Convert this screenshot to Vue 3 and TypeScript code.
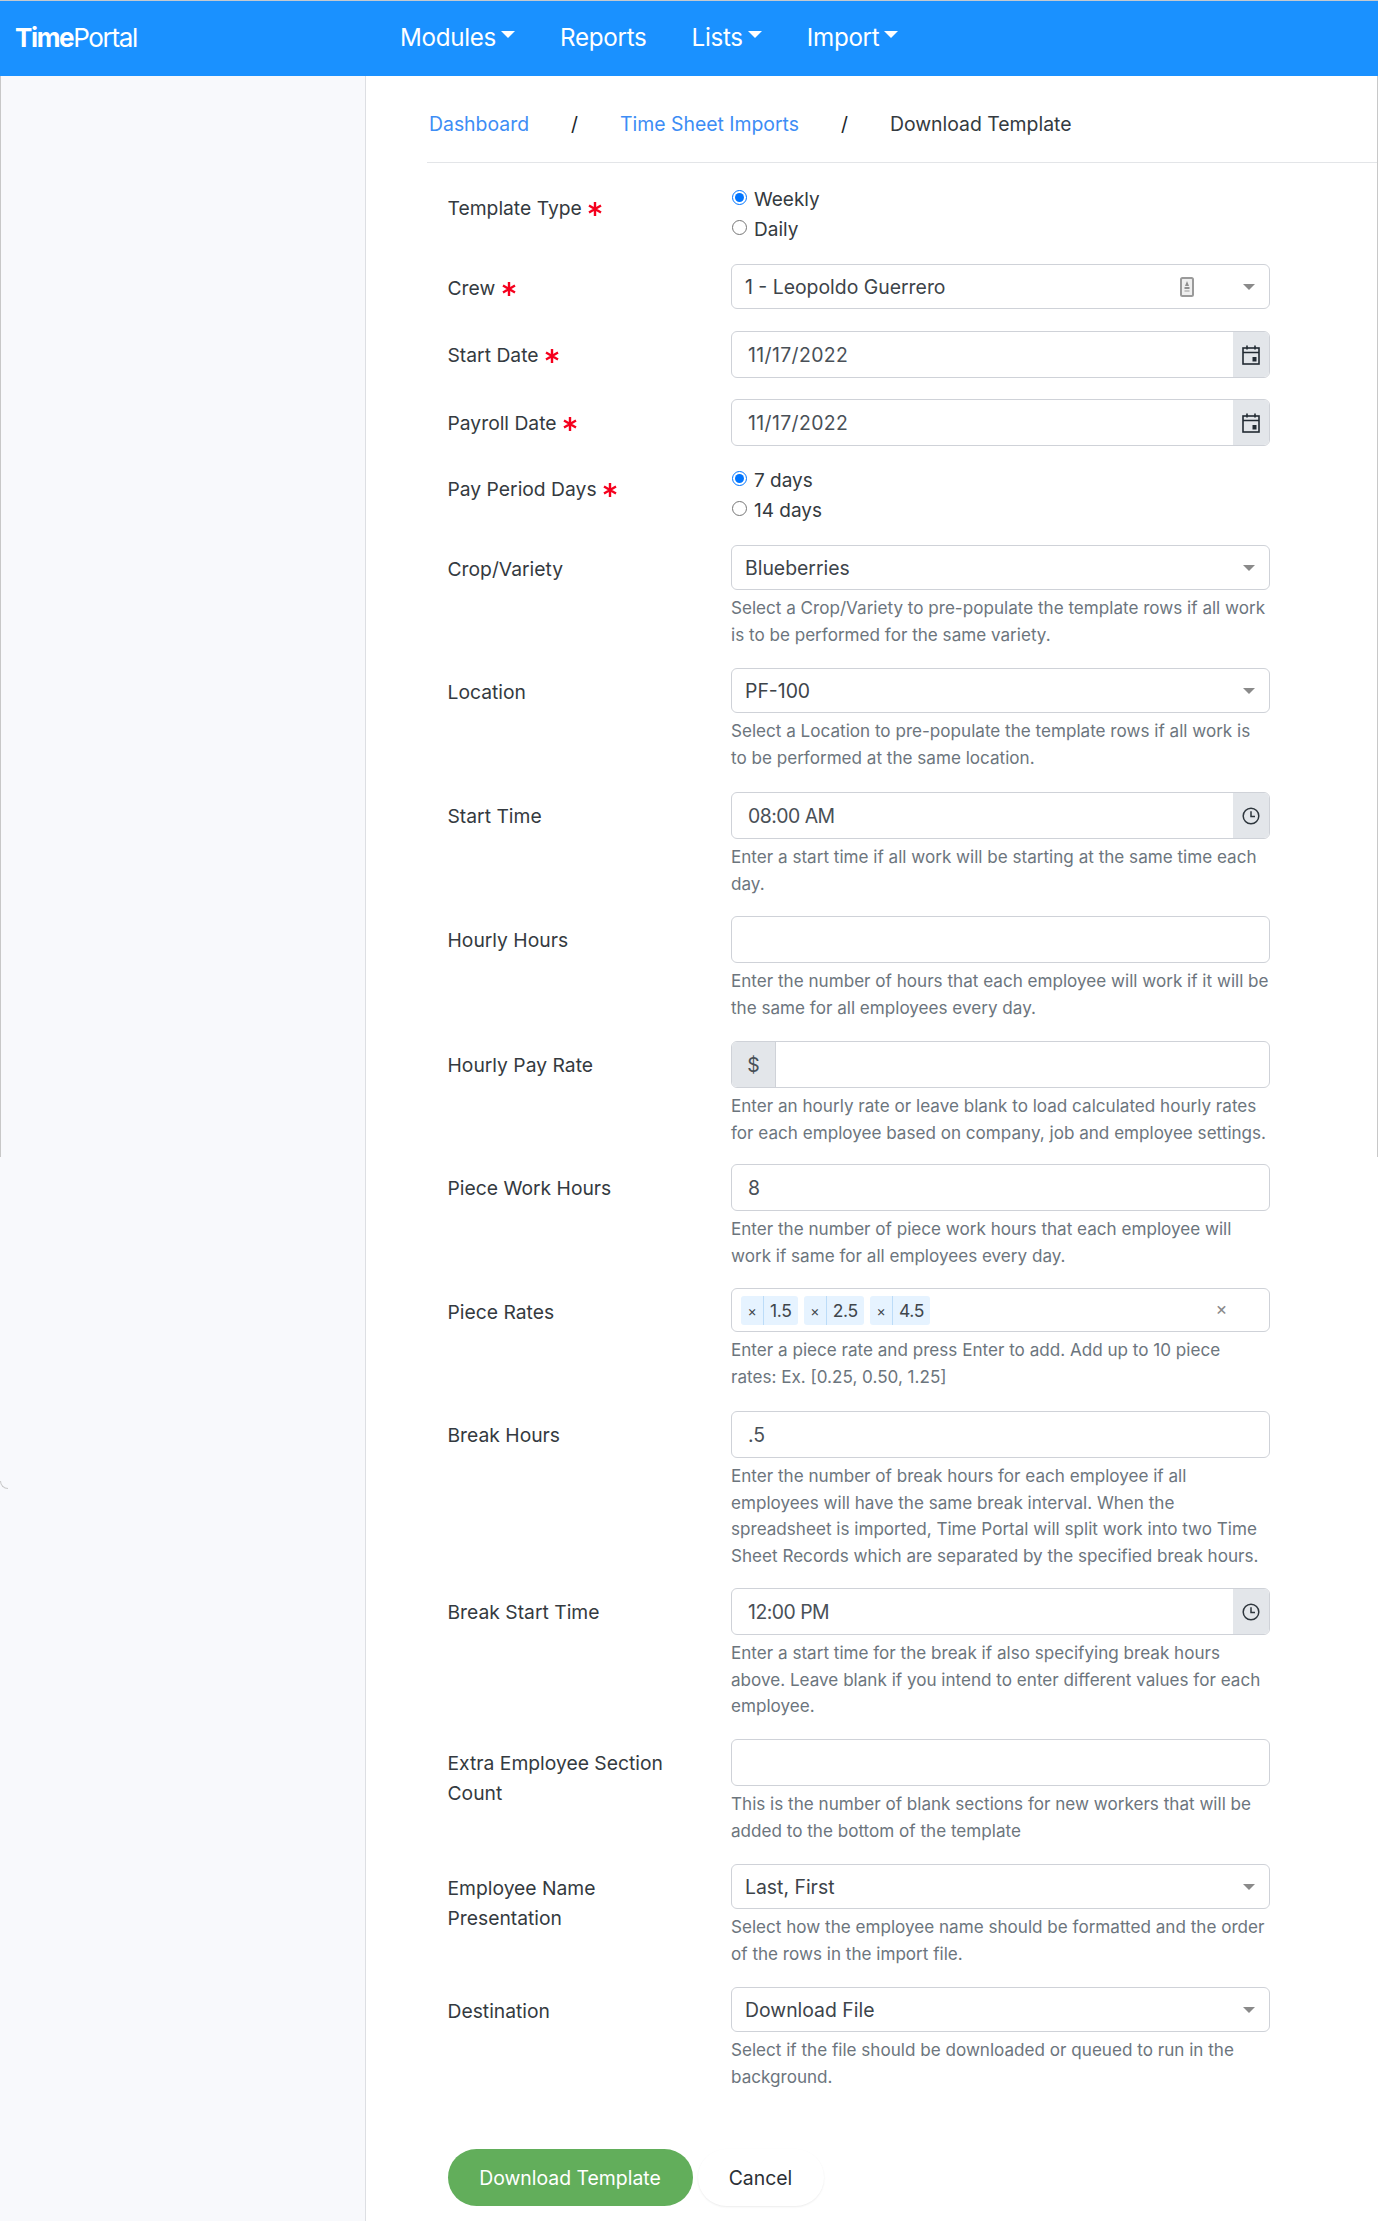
<script setup lang="ts">
type Row = {
  label: string[];
  req?: boolean;
  kind: 'radio' | 'select' | 'input' | 'date' | 'time' | 'money' | 'tags';
  value?: string;
  options?: { text: string; on: boolean }[];
  help?: string[];
  crew?: boolean;
  gap: number;
};

const navItems = [
  { text: 'Modules', caret: true },
  { text: 'Reports', caret: false },
  { text: 'Lists', caret: true },
  { text: 'Import', caret: true },
];

const rows: Row[] = [
  { gap: 20, label: ['Template Type'], req: true, kind: 'radio', options: [{ text: 'Weekly', on: true }, { text: 'Daily', on: false }] },
  { gap: 22, label: ['Crew'], req: true, kind: 'select', value: '1 - Leopoldo Guerrero', crew: true },
  { gap: 21, label: ['Start Date'], req: true, kind: 'date', value: '11/17/2022' },
  { gap: 19, label: ['Payroll Date'], req: true, kind: 'date', value: '11/17/2022' },
  { gap: 20, label: ['Pay Period Days'], req: true, kind: 'radio', options: [{ text: '7 days', on: true }, { text: '14 days', on: false }] },
  { gap: 20, label: ['Crop/Variety'], kind: 'select', value: 'Blueberries', help: ['Select a Crop/Variety to pre-populate the template rows if all work', 'is to be performed for the same variety.'] },
  { gap: 21, label: ['Location'], kind: 'select', value: 'PF-100', help: ['Select a Location to pre-populate the template rows if all work is', 'to be performed at the same location.'] },
  { gap: 19, label: ['Start Time'], kind: 'time', value: '08:00 AM', help: ['Enter a start time if all work will be starting at the same time each', 'day.'] },
  { gap: 20, label: ['Hourly Hours'], kind: 'input', value: '', help: ['Enter the number of hours that each employee will work if it will be', 'the same for all employees every day.'] },
  { gap: 18, label: ['Hourly Pay Rate'], kind: 'money', value: '', help: ['Enter an hourly rate or leave blank to load calculated hourly rates', 'for each employee based on company, job and employee settings.'] },
  { gap: 19, label: ['Piece Work Hours'], kind: 'input', value: '8', help: ['Enter the number of piece work hours that each employee will', 'work if same for all employees every day.'] },
  { gap: 21, label: ['Piece Rates'], kind: 'tags', help: ['Enter a piece rate and press Enter to add. Add up to 10 piece', 'rates: Ex. [0.25, 0.50, 1.25]'] },
  { gap: 19, label: ['Break Hours'], kind: 'input', value: '.5', help: ['Enter the number of break hours for each employee if all', 'employees will have the same break interval. When the', 'spreadsheet is imported, Time Portal will split work into two Time', 'Sheet Records which are separated by the specified break hours.'] },
  { gap: 19.5, label: ['Break Start Time'], kind: 'time', value: '12:00 PM', help: ['Enter a start time for the break if also specifying break hours', 'above. Leave blank if you intend to enter different values for each', 'employee.'] },
  { gap: 20, label: ['Extra Employee Section', 'Count'], kind: 'input', value: '', help: ['This is the number of blank sections for new workers that will be', 'added to the bottom of the template'] },
  { gap: 20, label: ['Employee Name', 'Presentation'], kind: 'select', value: 'Last, First', help: ['Select how the employee name should be formatted and the order', 'of the rows in the import file.'] },
  { gap: 0, label: ['Destination'], kind: 'select', value: 'Download File', help: ['Select if the file should be downloaded or queued to run in the', 'background.'] },
];

const tags = ['1.5', '2.5', '4.5'];
</script>

<template>
  <div class="page">
    <header class="nav">
      <div class="logo"><b>Time</b>Portal</div>
      <nav class="menu">
        <a v-for="item in navItems" :key="item.text" class="menu-item">
          {{ item.text }}<i v-if="item.caret" class="nav-caret"></i>
        </a>
      </nav>
    </header>
    <div class="body">
      <aside class="side"></aside>
      <main class="main">
        <div class="crumbs">
          <a class="link">Dashboard</a>
          <span class="sep">/</span>
          <a class="link">Time Sheet Imports</a>
          <span class="sep">/</span>
          <span class="current">Download Template</span>
        </div>
        <form class="form" @submit.prevent>
          <div v-for="row in rows" :key="row.label[0]" class="row" :style="{ marginBottom: row.gap + 'px' }">
            <div class="label">
              <div v-for="(line, i) in row.label" :key="i">
                {{ line }}
                <svg v-if="row.req" class="star" viewBox="0 0 14 14" width="14" height="14">
                  <path d="M7 0v14M1 3.5l12 7M13 3.5l-12 7" stroke="#f5001d" stroke-width="2.4" fill="none" />
                </svg>
              </div>
            </div>
            <div class="control">
              <div v-if="row.kind === 'radio'" class="radios">
                <label v-for="o in row.options" :key="o.text" class="radio">
                  <input type="radio" :checked="o.on" :name="row.label[0]" />
                  <span>{{ o.text }}</span>
                </label>
              </div>

              <div v-else-if="row.kind === 'select'" class="box select">
                <span class="select-text">{{ row.value }}</span>
                <svg v-if="row.crew" class="crew-icon" viewBox="0 0 14 20" width="14" height="20">
                  <rect x="1" y="1" width="12" height="18" rx="1.5" fill="#efefef" stroke="#9a9a9a" stroke-width="2" />
                  <path d="M7 4l2 5H5z" fill="#8f8f8f" />
                  <rect x="4.5" y="10" width="5" height="2" fill="#8f8f8f" />
                  <rect x="4.5" y="13" width="5" height="2" fill="#c4c4c4" />
                </svg>
                <i class="select-caret"></i>
              </div>

              <div v-else-if="row.kind === 'tags'" class="box tags">
                <span v-for="t in tags" :key="t" class="tag">
                  <span class="tag-x">×</span><span class="tag-v">{{ t }}</span>
                </span>
                <span class="tags-clear">×</span>
              </div>

              <div v-else class="box field">
                <span v-if="row.kind === 'money'" class="addon addon-left">$</span>
                <input class="text" :class="'text-' + row.kind" type="text" :value="row.value" />
                <span v-if="row.kind === 'date'" class="addon">
                  <svg viewBox="0 0 18 20" width="18" height="20" fill="none" stroke="#222b33" stroke-width="1.6">
                    <rect x="1" y="3" width="16" height="16" />
                    <path d="M1 7.5h16M5 0.5v4M13 0.5v4" />
                    <rect x="10.5" y="12" width="4" height="4.5" fill="#222b33" stroke="none" />
                  </svg>
                </span>
                <span v-if="row.kind === 'time'" class="addon">
                  <svg viewBox="0 0 18 18" width="18" height="18" fill="none" stroke="#2e363d" stroke-width="1.5">
                    <circle cx="9" cy="9" r="7.8" />
                    <path d="M9 4.2v5.3h4" />
                  </svg>
                </span>
              </div>

              <div v-if="row.help" class="help">
                <div v-for="(line, i) in row.help" :key="i">{{ line }}</div>
              </div>
            </div>
          </div>
          <div class="actions">
            <button class="btn primary" type="button">Download Template</button>
            <button class="btn plain" type="button">Cancel</button>
          </div>
        </form>
      </main>
    </div>
    <i class="edge edge-left"></i>
    <i class="edge edge-right"></i>
    <i class="corner"></i>
  </div>
</template>

<style scoped>
.page {
  position: relative;
  width: 1378px;
  height: 2221px;
  overflow: hidden;
  background: #fff;
  font-family: Inter, "Liberation Sans", sans-serif;
  color: #343a40;
}
.nav {
  display: flex;
  align-items: center;
  height: 75px;
  box-sizing: content-box;
  border-top: 1px solid #c5c9cf;
  background: #1a91ff;
  color: #fff;
  padding-left: 15px;
}
.logo {
  width: 385px;
  margin-top: -2px;
  font-size: 26px;
  letter-spacing: -1.35px;
  font-weight: 400;
}
.logo b {
  font-weight: 700;
}
.menu {
  display: flex;
  gap: 45px;
  margin-top: -2px;
}
.menu-item {
  display: flex;
  align-items: center;
  font-size: 24.2px;
  letter-spacing: -0.3px;
}
.nav-caret {
  margin-left: 5px;
  margin-top: -6px;
  border-left: 7px solid transparent;
  border-right: 7px solid transparent;
  border-top: 7px solid #fff;
}
.body {
  display: flex;
  min-height: 2145px;
}
.side {
  width: 365px;
  flex: none;
  background: #f8f9fc;
  border-right: 1px solid #dddfe3;
}
.main {
  flex: 1;
  padding-left: 61px;
}
.crumbs {
  display: flex;
  align-items: center;
  box-sizing: border-box;
  height: 87px;
  border-bottom: 1px solid #e3e5e8;
  padding: 9px 0 0 2px;
  font-size: 19.4px;
}
.link {
  color: #3d8df5;
}
.sep {
  margin: 0 42px;
  color: #212529;
}
.current {
  color: #343a40;
}
.form {
  padding: 21px 0 0 20.5px;
}
.row {
  display: grid;
  grid-template-columns: 283.5px 538.5px;
}
.label {
  padding-top: 9px;
  font-size: 19.3px;
  line-height: 30px;
  color: #343a40;
}
.star {
  margin-left: 1px;
  vertical-align: -1px;
}
.radios {
  display: flex;
  flex-direction: column;
}
.radio {
  display: flex;
  align-items: center;
  height: 30px;
  font-size: 19px;
}
.radio input {
  width: 15px;
  height: 15px;
  margin: -3px 7px 0 1px;
}
.box {
  display: flex;
  align-items: center;
  border: 1px solid #cfd2d8;
  border-radius: 6px;
  background: #fff;
  box-sizing: border-box;
  overflow: hidden;
}
.select {
  height: 45px;
  padding-left: 13px;
  position: relative;
  font-size: 19.4px;
  color: #3d444a;
}
.select-text {
  flex: 1;
}
.crew-icon {
  position: absolute;
  right: 75px;
  top: 12px;
}
.select-caret {
  margin-right: 14px;
  border-left: 6px solid transparent;
  border-right: 6px solid transparent;
  border-top: 6px solid #8a8a8a;
}
.field {
  height: 47px;
}
.text {
  flex: 1;
  min-width: 0;
  height: 100%;
  border: 0;
  outline: 0;
  padding: 1px 16px 0;
  box-sizing: border-box;
  font: inherit;
  font-size: 19.4px;
  color: #495057;
  background: transparent;
}
.text-date {
  letter-spacing: 0.4px;
}
.text-time {
  letter-spacing: -0.5px;
}
.addon {
  flex: none;
  display: flex;
  align-items: center;
  justify-content: center;
  align-self: stretch;
  width: 36px;
  background: #e3e6ea;
}
.addon-left {
  width: 43px;
  border-right: 1px solid #cfd2d8;
  font-size: 19.4px;
  color: #495057;
}
.tags {
  height: 44px;
  padding-left: 9px;
  gap: 6px;
  position: relative;
}
.tag {
  display: flex;
  align-items: center;
  height: 29px;
  background: #e6f3ff;
  border-radius: 3px;
  font-size: 17.5px;
  letter-spacing: -0.3px;
  color: #3f464c;
}
.tag-x {
  display: block;
  width: 22px;
  line-height: 29px;
  text-align: center;
  border-right: 1px solid #bcdcf8;
  font-size: 14px;
}
.tag-v {
  padding: 0 6px;
}
.tags-clear {
  position: absolute;
  right: 41px;
  top: 9px;
  font-size: 18px;
  color: #8a8a8a;
}
.help {
  margin-top: 5px;
  font-size: 17.1px;
  line-height: 26.5px;
  color: #6c757d;
  white-space: nowrap;
}
.actions {
  display: flex;
  gap: 5px;
  margin-top: 59px;
}
.btn {
  height: 57px;
  border: 0;
  border-radius: 29px;
  font: inherit;
  font-size: 19.4px;
}
.primary {
  width: 245px;
  background: #62ae5b;
  color: #fff;
}
.plain {
  width: 126px;
  background: #fff;
  color: #2b3036;
  box-shadow: 0 1px 2px rgba(0, 0, 0, 0.08);
}
.edge {
  position: absolute;
  top: 76px;
  width: 1px;
  height: 1081px;
  background: #c8c8c8;
}
.edge-left {
  left: 0;
}
.edge-right {
  right: 0;
}
.corner {
  position: absolute;
  left: 0;
  top: 1481px;
  width: 8px;
  height: 8px;
  border-left: 1px solid #c8c8c8;
  border-bottom: 1px solid #c8c8c8;
  border-bottom-left-radius: 8px;
  box-sizing: border-box;
}
</style>
